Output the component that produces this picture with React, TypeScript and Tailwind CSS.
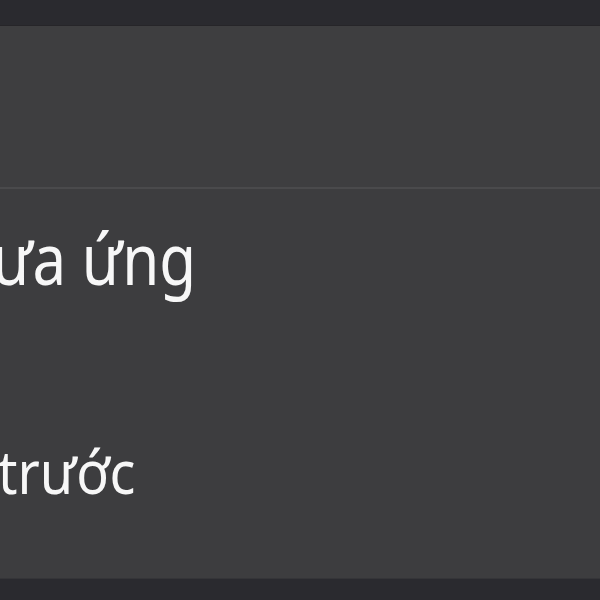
export default function App() {
  return (
    <div
      className="w-[600px] h-[600px] flex flex-col overflow-hidden bg-[#3d3d3f]"
      style={{ fontFamily: '"Noto Sans", "Open Sans", sans-serif' }}
    >
      {/* Top bar */}
      <div className="h-[26px] shrink-0 bg-[#2a2a2f] border-b border-[#262529]" />

      {/* Header area */}
      <div className="h-[161px] shrink-0 bg-[#3e3e40]" />
      <div className="h-[2px] shrink-0 bg-[#4a4a4c]" />

      {/* Content */}
      <div className="flex-1 flex flex-col text-[#f7f7f7]">
        <div className="pt-[33px] -ml-[8px]">
          <p className="text-[60px] leading-none origin-top scale-y-[1.18] whitespace-nowrap">
            ưa ứng
          </p>
        </div>
        <div className="pt-[158px] -ml-[2px]">
          <p className="text-[54px] leading-none origin-top scale-y-[1.12] whitespace-nowrap">
            trước
          </p>
        </div>
      </div>

      {/* Bottom bar */}
      <div className="h-[22px] shrink-0 bg-[#2a2a2f] border-t border-[#353538]" />
    </div>
  )
}
